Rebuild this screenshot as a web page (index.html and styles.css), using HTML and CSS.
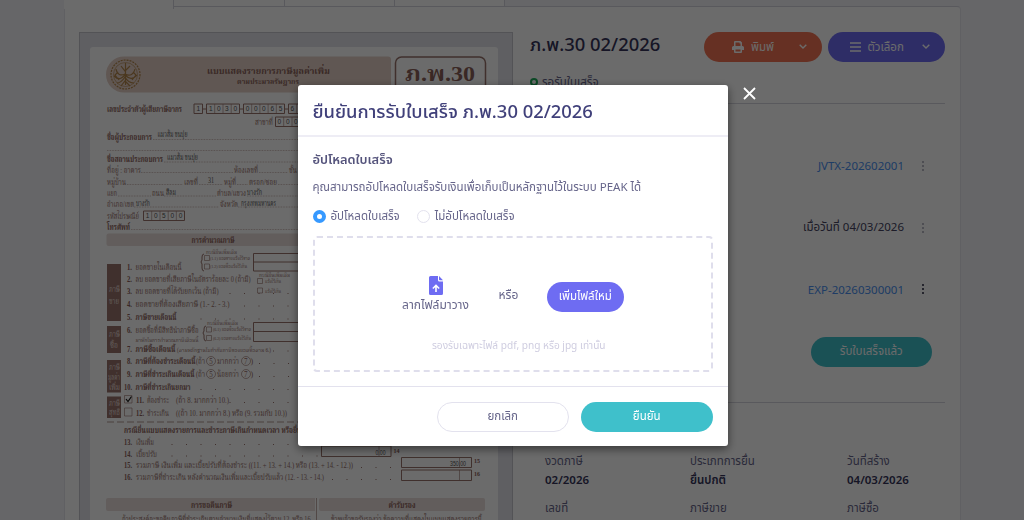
FILE: index.html
```html
<!DOCTYPE html>
<html lang="th">

<head>
  <meta charset="UTF-8">
  <meta name="viewport" content="width=device-width, initial-scale=1.0">
  <title>ภ.พ.30 02/2026</title>
  <link rel="stylesheet" href="styles.css">
</head>

<body>
  <main class="page">
    <nav class="tabs"><span class="active"></span><span></span><span></span><span></span></nav>

    <div class="card">
      <div class="viewer">
        <!-- แบบ ภ.พ.30 -->
        <svg class="paper" viewBox="90 47 408 480" width="408" height="480">
          <path class="band-top" d="M124 56.500H388a3 3 0 0 1 3 3V92.500H124a18 18 0 0 1 0-36z" />
          <g class="seal">
            <circle cx="125.500" cy="74.500" r="14.500" stroke-dasharray="2 1" />
            <circle cx="125.500" cy="74.500" r="12" stroke-width=".6" />
            <path d="M125.500 63v22M121 66l4 5 5-5M116 69c1 6 5 7 9 5 5 3 9 0 10-5M114 76c5 5 8 2 11-1 4 4 8 5 12 0M117 83c4 0 6-3 8-6 2 4 5 6 9 6M121 86l4-5 5 5M118 72l-3 3 4 5M133 72l3 3-4 5" />
          </g>
          <g class="b" font-size="9.500">
            <text x="207" y="73.500" textLength="123">แบบแสดงรายการภาษีมูลค่าเพิ่ม</text>
            <text x="237" y="84" textLength="62" font-size="7.500">ตามประมวลรัษฎากร</text>
          </g>
          <rect class="box" x="395.500" y="57" width="90" height="45" rx="6" stroke-width="1.500" />
          <text class="b" x="405" y="80.500" textLength="70" font-size="22">ภ.พ.30</text>

          <g class="b">
            <text x="107" y="112" textLength="75">เลขประจำตัวผู้เสียภาษีอากร</text>
            <text x="107" y="140" textLength="45">ชื่อผู้ประกอบการ</text>
            <text x="107" y="162" textLength="56">ชื่อสถานประกอบการ</text>
            <text x="107" y="230" textLength="23">โทรศัพท์</text>
          </g>
          <path class="box" d="M194 104h8.500v9.500H194zM206.500 104h33v9.500h-33zM243.500 104h41v9.500h-41zM288.500 104h33v9.500h-33zM275.500 117h41v9.500h-41zM143.500 211h41v9.500h-41zM202.500 109h4M239.500 109h4M284.500 109h4" />
          <path class="thin" d="M214.700 104v9.500M223 104v9.500M231.200 104v9.500M251.700 104v9.500M259.900 104v9.500M268.100 104v9.500M276.300 104v9.500M296.700 104v9.500M283.700 117v9.500M292 117v9.500M151.700 211v9.500M160 211v9.500M168.200 211v9.500M176.300 211v9.500" />
          <g class="ink mono">
            <text x="196.500 209 217 225 233.500 245.700 254 262 270.500 278.700 290.500" y="111.300">11030000656</text>
            <text x="277.500 286 294" y="124.300">000</text>
            <text x="145.700 154 162 170.500 178.700" y="218.300">10500</text>
          </g>
          <g>
            <text x="255" y="125" textLength="18">สาขาที่</text>
            <text x="107" y="173" textLength="34">ที่อยู่ : อาคาร</text>
            <text x="234" y="173" textLength="24">ห้องเลขที่</text>
            <text x="289" y="173" textLength="8">ชั้น</text>
            <text x="107" y="184.500" textLength="19">หมู่บ้าน</text>
            <text x="184" y="184.500" textLength="14">เลขที่</text>
            <text x="224" y="184.500" textLength="12">หมู่ที่</text>
            <text x="249" y="184.500" textLength="28">ตรอก/ซอย</text>
            <text x="107" y="196" textLength="10">แยก</text>
            <text x="152" y="196" textLength="12">ถนน</text>
            <text x="217" y="196" textLength="29">ตำบล/แขวง</text>
            <text x="107" y="206.500" textLength="27">อำเภอ/เขต</text>
            <text x="220" y="206.500" textLength="18">จังหวัด</text>
            <text x="107" y="219" textLength="32">รหัสไปรษณีย์</text>
          </g>
          <g class="ink">
            <text x="157.500" y="137" textLength="30">แมวส้ม ขนปุย</text>
            <text x="167" y="159.500" textLength="31">แมวส้ม ขนปุย</text>
            <text x="208" y="183" textLength="6">31</text>
            <text x="166" y="195" textLength="10">สีลม</text>
            <text x="247" y="195" textLength="15">บางรัก</text>
            <text x="136" y="206" textLength="14">บางรัก</text>
            <text x="241" y="206" textLength="35">กรุงเทพมหานคร</text>
          </g>
          <path class="dots" d="M153 139.500h150M107 150.500h196M164 162h140M141 172.500h92M259 172.500h29M127 184.500h56M199 184.500h24M237 184.500h11M278 184.500h20M118 196h33M164 196h52M247 196h52M134 207h85M238 207h60M131 229.500h167" />

          <rect class="band" x="106.500" y="233.500" width="379" height="12.500" rx="2" />
          <text class="b" x="191.500" y="242.500" textLength="43" font-size="8.500">การคำนวณภาษี</text>

          <path class="side" d="M107 264h14v57h-14zM107 326h14v27h-14zM107 360h14v32.500h-14zM107 396.500h14V418h-14z" />
          <g class="side-text">
            <text x="109" y="292" textLength="11">ภาษี</text>
            <text x="109" y="303.500" textLength="10">ขาย</text>
            <text x="109" y="337" textLength="11">ภาษี</text>
            <text x="110" y="348" textLength="8">ซื้อ</text>
            <text x="109" y="369.500" textLength="11">ภาษี</text>
            <text x="108" y="380" textLength="12">มูลค่า</text>
            <text x="109" y="390" textLength="11">เพิ่ม</text>
            <text x="109" y="405.500" textLength="11">ภาษี</text>
            <text x="109" y="415" textLength="11">สุทธิ</text>
          </g>

          <g class="b">
            <text x="127" y="270" textLength="5">1.</text>
            <text x="127" y="282" textLength="5">2.</text>
            <text x="127" y="294" textLength="5">3.</text>
            <text x="127" y="306.500" textLength="5">4.</text>
            <text x="127" y="319.500" textLength="5">5.</text>
            <text x="127" y="333" textLength="5">6.</text>
            <text x="127" y="351.500" textLength="5">7.</text>
            <text x="127" y="364" textLength="5">8.</text>
            <text x="127" y="377" textLength="5">9.</text>
            <text x="124" y="390" textLength="8">10.</text>
            <text x="136" y="403" textLength="8">11.</text>
            <text x="136" y="415.500" textLength="8">12.</text>
            <text x="124" y="445" textLength="8">13.</text>
            <text x="124" y="456.500" textLength="8">14.</text>
            <text x="124" y="468" textLength="8">15.</text>
            <text x="124" y="480" textLength="8">16.</text>
            <text x="135.500" y="319.500" textLength="41">ภาษีขายเดือนนี้</text>
            <text x="135.500" y="351.500" textLength="40">ภาษีซื้อเดือนนี้</text>
            <text x="135.500" y="364" textLength="60">ภาษีที่ต้องชำระเดือนนี้</text>
            <text x="135.500" y="377" textLength="59">ภาษีที่ชำระเกินเดือนนี้</text>
            <text x="135.500" y="390" textLength="55">ภาษีที่ชำระเกินยกมา</text>
            <text x="124" y="433" textLength="200">กรณียื่นแบบแสดงรายการและชำระภาษีเกินกำหนดเวลา หรือยื่นเพิ่มเติม</text>
          </g>
          <g>
            <text x="135.500" y="270" textLength="46">ยอดขายในเดือนนี้</text>
            <text x="135.500" y="282" textLength="115">ลบ ยอดขายที่เสียภาษีในอัตราร้อยละ 0 (ถ้ามี)</text>
            <text x="135.500" y="294" textLength="83">ลบ ยอดขายที่ได้รับยกเว้น (ถ้ามี)</text>
            <text x="135.500" y="306.500" textLength="94">ยอดขายที่ต้องเสียภาษี (1.- 2. - 3.)</text>
            <text x="135.500" y="333" textLength="63">ยอดซื้อที่มีสิทธินำภาษีซื้อ</text>
            <text x="135.500" y="341.500" textLength="63" font-size="6">มาหักในการคำนวณภาษีเดือนนี้</text>
            <text x="177" y="351.500" textLength="94" font-size="6">(ตามหลักฐานใบกำกับภาษีของยอดซื้อตาม 6.)</text>
            <text x="196" y="364" textLength="9">(ถ้า</text>
            <text x="217" y="364" textLength="22">มากกว่า</text>
            <text x="196" y="377" textLength="9">(ถ้า</text>
            <text x="217" y="377" textLength="22">น้อยกว่า</text>
            <text x="209.300" y="363.500" textLength="3.500">5</text>
            <text x="244" y="363.500" textLength="3.500">7</text>
            <text x="209.300" y="376.500" textLength="3.500">5</text>
            <text x="244" y="376.500" textLength="3.500">7</text>
            <text x="250.500" y="364">)</text>
            <text x="250.500" y="377">)</text>
            <text x="147" y="403" textLength="22">ต้องชำระ</text>
            <text x="176" y="403" textLength="53">(ถ้า 8. มากกว่า 10.)</text>
            <text x="147" y="415.500" textLength="22">ชำระเกิน</text>
            <text x="176" y="415.500" textLength="111">((ถ้า 10. มากกว่า 8.) หรือ (9. รวมกับ 10.))</text>
            <text x="136" y="445" textLength="18">เงินเพิ่ม</text>
            <text x="136" y="456.500" textLength="21">เบี้ยปรับ</text>
            <text x="136" y="468" textLength="217">รวมภาษี เงินเพิ่ม และเบี้ยปรับที่ต้องชำระ ((11. + 13. + 14.) หรือ (13. + 14. - 12.))</text>
            <text x="136" y="480" textLength="188">รวมภาษีที่ชำระเกิน หลังคำนวณเงินเพิ่มและเบี้ยปรับแล้ว (12. - 13. - 14.)</text>
          </g>
          <g font-size="5">
            <text x="206" y="254" textLength="31">กรณียื่นเพิ่มเติม</text>
            <text x="210" y="260" textLength="40">(1.1) ยอดขายแจ้งไว้ขาด</text>
            <text x="210" y="268" textLength="37">(1.2) ยอดซื้อแจ้งไว้เกิน</text>
            <text x="259" y="276.500" textLength="31">กรณียื่นเพิ่มเติม</text>
            <text x="265" y="283" textLength="16">แจ้งไว้เกิน</text>
            <text x="265" y="292.500" textLength="16">แจ้งไว้เกิน</text>
            <text x="207" y="325" textLength="31">กรณียื่นเพิ่มเติม</text>
            <text x="213" y="331" textLength="38">(6.1) ยอดซื้อแจ้งไว้ขาด</text>
            <text x="213" y="339.500" textLength="38">(6.2) ยอดขายแจ้งไว้เกิน</text>
          </g>
          <path class="box" d="M204 254q-2 0-2 3v3l-1 2 1 2v4q0 3 2 3M206 326q-2 0-2 3v2l-1 2 1 2v3q0 3 2 3M253.500 253.500h70V271h-70zM253.500 262h70M253.500 322.500h70v19h-70zM253.500 331.500h70" />
          <path class="thin" d="M204.500 255.500h5v5h-5zM204.500 264h5v5h-5zM257.500 278.500h5v5h-5zM257.500 288h5v5h-5zM206.500 327h5v5h-5zM206.500 335.500h5v5h-5zM124.500 395.500h7.500v7.500h-7.500zM124.500 408h7.500v8h-7.500z" />
          <g class="thin"><circle cx="211" cy="361" r="4.500" /><circle cx="246" cy="361" r="4.500" /><circle cx="211" cy="374" r="4.500" /><circle cx="246" cy="374" r="4.500" /></g>
          <path class="tick" d="M126 399l2 2.500 3.500-5" />
          <path class="leader" d="M229.500 293.500h70M244 306h56M200.500 319h98M273 351h26M259 363.500h40M259 376.500h40M200.500 389.500h98M229.500 402.500h70M171.500 444.500h128M171.500 456h146M361 467.500h40M332 479.500h68" />
          <path class="cut" d="M107 422h379" />

          <path class="box" d="M321.500 446h69.500v10.500h-69.500zM401.500 457.500h70v10h-70zM401.500 470h70v10.500h-70z" />
          <path class="thin" d="M379 446v10.500M459.500 457.500v10M459.500 470v10.500M316.500 498v30" />
          <g class="ink mono">
            <text x="375.500" y="455" textLength="10">0.00</text>
            <text x="450" y="466" textLength="16">350.00</text>
          </g>
          <g class="b" font-size="6">
            <text x="393.500" y="453">14</text>
            <text x="474" y="463">15</text>
            <text x="474" y="476">16</text>
          </g>

          <path class="band" d="M108 498h207v13H108q-2 0-2-2v-9q0-2 2-2zM321 498h162q2 0 2 2v9q0 2-2 2H321q-2 0-2-2v-9q0-2 2-2z" />
          <g class="b" font-size="8.500">
            <text x="191" y="508" textLength="41">การขอคืนภาษี</text>
            <text x="388.500" y="508" textLength="27">คำรับรอง</text>
          </g>
          <text x="122" y="521.500" textLength="190">ถ้าประสงค์จะขอคืนภาษีที่ชำระเกินตามจำนวนเงินที่แสดงไว้ตาม 12. หรือ 16.</text>
          <text x="331" y="521.500" textLength="151">ข้าพเจ้าขอรับรองว่า ข้อความที่แสดงในแบบแสดงรายการนี้</text>
        </svg>
      </div>

      <section class="detail">
        <header class="detail-head">
          <h1>ภ.พ.30 02/2026</h1>
          <div class="actions">
            <button class="btn btn-print">
              <svg width="12" height="12" viewBox="0 0 12 12"><path fill="currentColor" fill-rule="evenodd" d="M2 5V1q0-1 1-1h5.500L10 1.500V5h.5Q12 5 12 6.500V9h-2v2q0 1-1 1H3q-1 0-1-1V9H0V6.500Q0 5 1.500 5zM3.500 1.500V5h5V2.500h-1v-1zM3.500 8.500v2h5v-2z" /></svg>
              <span class="btn-label">พิมพ์</span>
              <svg class="chevron" width="8" height="5" viewBox="0 0 8 5"><path d="M.7.700L4 4 7.300.700" /></svg>
            </button>
            <button class="btn btn-option">
              <svg width="11" height="10" viewBox="0 0 11 10"><path stroke="currentColor" stroke-width="1.300" d="M0 1h11M0 5h11M0 9h11" /></svg>
              <span class="btn-label">ตัวเลือก</span>
              <svg class="chevron" width="8" height="5" viewBox="0 0 8 5"><path d="M.7.700L4 4 7.300.700" /></svg>
            </button>
          </div>
        </header>
        <p class="status"><i></i>รอรับใบเสร็จ</p>

        <div class="refs">
          <div class="ref"><a>JVTX-202602001</a><b class="more"></b></div>
          <div class="ref"><span>เมื่อวันที่ 04/03/2026</span><b class="more"></b></div>
          <div class="ref"><a>EXP-20260300001</a><b class="more active"></b></div>
          <button class="btn btn-received">รับใบเสร็จแล้ว</button>
        </div>

        <dl class="info">
          <div><dt>งวดภาษี</dt><dd>02/2026</dd></div>
          <div><dt>ประเภทการยื่น</dt><dd>ยื่นปกติ</dd></div>
          <div><dt>วันที่สร้าง</dt><dd>04/03/2026</dd></div>
          <div><dt>เลขที่</dt></div>
          <div><dt>ภาษีขาย</dt></div>
          <div><dt>ภาษีซื้อ</dt></div>
        </dl>
      </section>
    </div>
  </main>

  <div class="overlay">
    <div class="modal">
      <h2 class="modal-head">ยืนยันการรับใบเสร็จ ภ.พ.30 02/2026</h2>
      <div class="modal-body">
        <h3>อัปโหลดใบเสร็จ</h3>
        <p class="desc">คุณสามารถอัปโหลดใบเสร็จรับเงินเพื่อเก็บเป็นหลักฐานไว้ในระบบ PEAK ได้</p>
        <div class="radios">
          <label class="radio"><i class="dot checked"></i><span>อัปโหลดใบเสร็จ</span></label>
          <label class="radio"><i class="dot"></i><span>ไม่อัปโหลดใบเสร็จ</span></label>
        </div>
        <div class="dropzone">
          <div class="drop-row">
            <div class="drag">
              <svg width="14" height="19" viewBox="0 0 14 19"><path fill="#6e6cf2" fill-rule="evenodd" d="M1.500 0H9v4q0 1.500 1.500 1.500H14v12q0 1.500-1.500 1.500h-11Q0 19 0 17.500v-16Q0 0 1.500 0zM7 8.300L3.300 12l1 1.100 1.900-1.800V16h1.600v-4.700l1.900 1.800 1-1.100zM10 0l4 4.300h-3.300Q10 4.300 10 3.600z" /></svg>
              <span>ลากไฟล์มาวาง</span>
            </div>
            <span class="or">หรือ</span>
            <button class="btn btn-file">เพิ่มไฟล์ใหม่</button>
          </div>
          <p class="hint">รองรับเฉพาะไฟล์ pdf, png หรือ jpg เท่านั้น</p>
        </div>
      </div>
      <footer class="modal-foot">
        <button class="btn btn-cancel">ยกเลิก</button>
        <button class="btn btn-confirm">ยืนยัน</button>
      </footer>
      <svg class="close" width="13" height="13" viewBox="0 0 13 13"><path d="M1 1l11 11M12 1L1 12" /></svg>
    </div>
  </div>

  <script>
    // บีบตัวอักษรในแบบฟอร์มให้พอดีช่อง
    document.querySelectorAll('.paper text[textLength]').forEach(function (t) {
      t.setAttribute('lengthAdjust', 'spacingAndGlyphs');
    });
  </script>
</body>

</html>
```
FILE: styles.css
```css
* {
  box-sizing: border-box;
}

body {
  margin: 0;
  height: 520px;
  overflow: hidden;
  background: #f3f2f7;
  color: #66658a;
  font-family: "Noto Sans", "Noto Sans Thai", sans-serif;
  font-size: 11.500px;
}

h1, h2, h3, p, dl, dd {
  margin: 0;
}

.page {
  width: 897px;
  height: 520px;
  margin-left: 64px;
  overflow: hidden;
}

/* แท็บด้านบน */
.tabs {
  display: flex;
  width: 441px;
  height: 7px;
}

.tabs span {
  flex: 1;
  background: #fff;
  border-right: 1px solid #d5d5de;
  border-bottom: 1px solid #d5d5de;
}

.tabs .active {
  border-bottom: 0;
}

.card {
  display: flex;
  height: 600px;
  margin-top: -1px;
  padding: 25px 15px 0 14px;
  background: #fff;
  border: 1px solid #e4e4ec;
  border-top-color: #d5d5de;
  border-radius: 0 4px 0 0;
}

.tabs .active {
  position: relative;
  height: 9px;
}

.viewer {
  width: 433.500px;
  flex: none;
  padding: 14px 10px;
  background: #e2e2ea;
  border: 1px solid #c6c6ce;
}

/* เอกสาร */
.paper {
  display: block;
  background: #fff;
  border-radius: 3px;
  fill: #946e67;
  font-family: "Liberation Serif", "Noto Serif Thai", serif;
  font-size: 8px;
}

.paper .b {
  font-weight: bold;
  fill: #8a6058;
}

.paper .ink {
  fill: #555;
}

.paper .mono {
  font-family: "Liberation Sans", sans-serif;
  font-size: 6.500px;
}

.paper .band-top {
  fill: #e4d0c6;
}

.paper .band {
  fill: #eadedb;
}

.paper .side {
  fill: #98736b;
}

.paper .side-text {
  fill: #e8dcd8;
}

.paper .box,
.paper .thin {
  fill: none;
  stroke: #98736b;
}

.paper .thin {
  stroke-width: .6;
}

.paper .seal {
  fill: none;
  stroke: #b3854a;
  stroke-width: 1.200;
}

.paper .dots {
  fill: none;
  stroke: #98736b;
  stroke-width: .5;
  stroke-dasharray: .8 .8;
}

.paper .leader {
  stroke: #98736b;
  stroke-dasharray: 1 13.500;
}

.paper .cut {
  stroke: #b59a94;
  stroke-dasharray: 7 3;
}

.paper .tick {
  fill: none;
  stroke: #111;
  stroke-width: 1.200;
}

/* รายละเอียดด้านขวา */
.detail {
  flex: 1;
  padding-left: 17.500px;
}

.detail-head {
  display: flex;
  justify-content: space-between;
  height: 30px;
}

h1 {
  font-size: 18.400px;
  font-weight: 500;
  line-height: 23px;
  color: #35345a;
  white-space: nowrap;
}

.actions {
  display: flex;
  gap: 6px;
}

.btn {
  display: flex;
  align-items: center;
  justify-content: center;
  height: 29.500px;
  padding: 0 0 2px;
  border: 0;
  border-radius: 15px;
  color: #fff;
  font: inherit;
  line-height: 16px;
  white-space: nowrap;
}

.actions .btn {
  width: 117.500px;
  justify-content: flex-start;
  padding: 0 15px 0 28px;
  gap: 7px;
}

.actions .btn-option {
  padding-left: 22px;
}

.btn-print {
  background: #f37453;
}

.btn-option {
  background: #6e6cf2;
}

.chevron {
  margin-left: auto;
  fill: none;
  stroke: currentColor;
  stroke-width: 1.400;
}

.status {
  display: flex;
  gap: 4px;
  height: 42px;
  padding-top: 11px;
  border-bottom: 1px solid #d5d5de;
  line-height: 18px;
}

.status i {
  width: 8px;
  height: 8px;
  margin-top: 5px;
  border: 2px solid #1fae5b;
  border-radius: 50%;
}

.refs {
  height: 299px;
  padding: 31px 13px 0 0;
  border-bottom: 1px solid #d5d5de;
}

.ref {
  display: flex;
  align-items: center;
  justify-content: flex-end;
  gap: 18px;
  height: 61.700px;
}

.ref a {
  color: #4a90f0;
}

.ref span {
  color: #45445f;
}

.more {
  width: 2px;
  height: 2px;
  margin-right: 8px;
  border-radius: 1px;
  background: #a5a5b5;
  box-shadow: 0 -4px #a5a5b5, 0 4px #a5a5b5;
}

.more.active {
  background: #22223a;
  box-shadow: 0 -4px #22223a, 0 4px #22223a;
}

.btn-received {
  width: 121.500px;
  margin: 17px 0 0 auto;
  background: #3fc0cb;
}

.info {
  display: grid;
  grid-template-columns: 145px 157px 1fr;
  padding: 48px 0 0 15px;
  row-gap: 9px;
}

.info dt,
.info dd {
  height: 19px;
  line-height: 19px;
}

.info dd {
  color: #35345a;
  font-weight: 600;
}

/* หน้าต่างยืนยัน */
.overlay {
  position: fixed;
  inset: 0;
  padding: 85px 0 0 298px;
  background: rgba(0, 0, 0, .58);
}

.modal {
  position: relative;
  width: 429.500px;
  height: 360.500px;
  background: #fff;
  border-radius: 3px;
  box-shadow: 0 3px 10px rgba(0, 0, 0, .5);
}

.modal-head {
  height: 52px;
  padding: 13px 14.500px 0;
  border-bottom: 2px solid #eeedf5;
  color: #40407a;
  font-size: 18.400px;
  font-weight: 500;
  line-height: 26px;
  white-space: nowrap;
}

.modal-body {
  height: 249px;
  padding: 13px 14.500px 0;
}

h3 {
  height: 18px;
  color: #55547c;
  font-size: 12.800px;
  font-weight: 600;
  line-height: 18px;
}

.desc {
  margin-top: 10px;
  height: 18px;
  line-height: 18px;
  white-space: nowrap;
}

.radios {
  display: flex;
  gap: 17px;
  margin-top: 11px;
  height: 18px;
  line-height: 18px;
}

.radio {
  display: flex;
  align-items: center;
  gap: 5px;
  white-space: nowrap;
}

.dot {
  width: 13px;
  height: 13px;
  border: 1px solid #e3e2ee;
  border-radius: 50%;
}

.dot.checked {
  border: 4px solid #3699ff;
}

.dropzone {
  height: 136px;
  margin-top: 11px;
  padding-top: 38px;
  border: 2px dashed #dfdeec;
  border-radius: 4px;
}

.drop-row {
  display: flex;
  padding-left: 87px;
}

.drag {
  display: flex;
  flex-direction: column;
  align-items: center;
  gap: 1px;
  width: 68px;
  font-size: 12px;
  line-height: 18px;
  white-space: nowrap;
}

.or {
  width: 20px;
  margin: 10px 28.500px 0 29px;
  font-size: 12px;
  line-height: 18px;
  white-space: nowrap;
}

.btn-file {
  width: 76.500px;
  margin-top: 6px;
  background: #6e6cf2;
}

.hint {
  margin-top: 22px;
  padding-left: 12px;
  color: #cfcde0;
  font-size: 10.100px;
  line-height: 18px;
  text-align: center;
}

.modal-foot {
  display: flex;
  justify-content: flex-end;
  gap: 11.500px;
  padding: 15px 14.500px 0;
  border-top: 1px solid #e3e2ee;
}

.modal-foot .btn {
  width: 132.500px;
}

.modal-foot .btn-cancel {
  background: #fff;
  border: 1px solid #e3e2ee;
  color: #66658a;
}

.btn-confirm {
  background: #3fc0cb;
}

.close {
  position: absolute;
  top: 2px;
  right: -28.500px;
  stroke: #fff;
  stroke-width: 1.800;
}
```
